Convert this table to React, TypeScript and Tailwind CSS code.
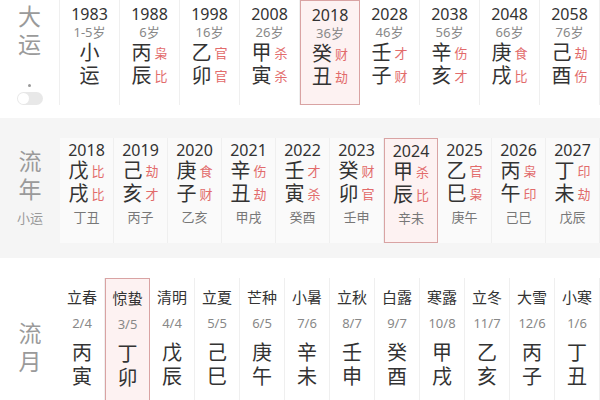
const FONT = "font-['Noto_Sans','Noto_Sans_CJK_SC',sans-serif]";

type Pillar = {
    top: string;
    sub?: string;
    stem: string;
    branch: string;
    stemTag?: string;
    branchTag?: string;
    extra?: string;
    hl?: boolean;
};

const dayun: Pillar[] = [
    { top: '1983', sub: '1-5岁', stem: '小', branch: '运' },
    { top: '1988', sub: '6岁', stem: '丙', stemTag: '枭', branch: '辰', branchTag: '比' },
    { top: '1998', sub: '16岁', stem: '乙', stemTag: '官', branch: '卯', branchTag: '官' },
    { top: '2008', sub: '26岁', stem: '甲', stemTag: '杀', branch: '寅', branchTag: '杀' },
    { top: '2018', sub: '36岁', stem: '癸', stemTag: '财', branch: '丑', branchTag: '劫', hl: true },
    { top: '2028', sub: '46岁', stem: '壬', stemTag: '才', branch: '子', branchTag: '财' },
    { top: '2038', sub: '56岁', stem: '辛', stemTag: '伤', branch: '亥', branchTag: '才' },
    { top: '2048', sub: '66岁', stem: '庚', stemTag: '食', branch: '戌', branchTag: '比' },
    { top: '2058', sub: '76岁', stem: '己', stemTag: '劫', branch: '酉', branchTag: '伤' },
];

const liunian: Pillar[] = [
    { top: '2018', stem: '戊', stemTag: '比', branch: '戌', branchTag: '比', extra: '丁丑' },
    { top: '2019', stem: '己', stemTag: '劫', branch: '亥', branchTag: '才', extra: '丙子' },
    { top: '2020', stem: '庚', stemTag: '食', branch: '子', branchTag: '财', extra: '乙亥' },
    { top: '2021', stem: '辛', stemTag: '伤', branch: '丑', branchTag: '劫', extra: '甲戌' },
    { top: '2022', stem: '壬', stemTag: '才', branch: '寅', branchTag: '杀', extra: '癸酉' },
    { top: '2023', stem: '癸', stemTag: '财', branch: '卯', branchTag: '官', extra: '壬申' },
    { top: '2024', stem: '甲', stemTag: '杀', branch: '辰', branchTag: '比', extra: '辛未', hl: true },
    { top: '2025', stem: '乙', stemTag: '官', branch: '巳', branchTag: '枭', extra: '庚午' },
    { top: '2026', stem: '丙', stemTag: '枭', branch: '午', branchTag: '印', extra: '己巳' },
    { top: '2027', stem: '丁', stemTag: '印', branch: '未', branchTag: '劫', extra: '戊辰' },
];

const liuyue: Pillar[] = [
    { top: '立春', sub: '2/4', stem: '丙', branch: '寅' },
    { top: '惊蛰', sub: '3/5', stem: '丁', branch: '卯', hl: true },
    { top: '清明', sub: '4/4', stem: '戊', branch: '辰' },
    { top: '立夏', sub: '5/5', stem: '己', branch: '巳' },
    { top: '芒种', sub: '6/5', stem: '庚', branch: '午' },
    { top: '小暑', sub: '7/6', stem: '辛', branch: '未' },
    { top: '立秋', sub: '8/7', stem: '壬', branch: '申' },
    { top: '白露', sub: '9/7', stem: '癸', branch: '酉' },
    { top: '寒露', sub: '10/8', stem: '甲', branch: '戌' },
    { top: '立冬', sub: '11/7', stem: '乙', branch: '亥' },
    { top: '大雪', sub: '12/6', stem: '丙', branch: '子' },
    { top: '小寒', sub: '1/6', stem: '丁', branch: '丑' },
];

// 干支 + 十神小字
function GanZhi({ ch, tag }: { ch: string; tag?: string }) {
    return (
        <div className="flex items-center justify-center gap-[3px] h-[22px]">
            <span className="block text-[20px] leading-[22px] text-[#333]">{ch}</span>
            {tag && <span className="block text-[13px] leading-[16px] text-[#e26b6b]">{tag}</span>}
        </div>
    );
}

function cellClass(hl?: boolean) {
    return hl
        ? 'border border-[#d9a3a3] bg-[#fdf2f2]'
        : 'border-r border-[#efefef]';
}

export default function App() {
    return (
        <div className={`w-[600px] h-[400px] overflow-hidden bg-white ${FONT}`}>
            {/* 大运 */}
            <div className="flex h-[118px]">
                <div className="w-[60px] flex flex-col items-center text-[#9a9a9a] border-r border-[#efefef] h-[105px]">
                    <span className="text-[23px] leading-[28px] mt-[2px]">大</span>
                    <span className="text-[23px] leading-[28px]">运</span>
                    <span className="w-[3px] h-[3px] rounded-full bg-[#999] mt-[26px]" />
                    <div className="mt-[5px] w-[26px] h-[13px] rounded-full bg-[#e8e8e8] flex items-center px-[1px]">
                        <span className="w-[11px] h-[11px] rounded-full bg-white" />
                    </div>
                </div>
                {dayun.map((p) => (
                    <div key={p.top} className={`w-[60px] h-[105px] flex flex-col items-center pt-[4px] ${cellClass(p.hl)}`}>
                        <span className="block text-[16px] leading-[20px] text-[#333]">{p.top}</span>
                        <span className="block text-[13px] leading-[17px] text-[#888]">{p.sub}</span>
                        <div className="mt-[1px]">
                            <GanZhi ch={p.stem} tag={p.stemTag} />
                        </div>
                        <div className="mt-[1px]">
                            <GanZhi ch={p.branch} tag={p.branchTag} />
                        </div>
                    </div>
                ))}
            </div>

            {/* 流年 */}
            <div className="flex h-[140px] bg-[#f5f5f5] pt-[20px]">
                <div className="w-[60px] flex flex-col items-center text-[#9a9a9a]">
                    <span className="text-[23px] leading-[28px] mt-[9px]">流</span>
                    <span className="text-[23px] leading-[28px]">年</span>
                    <span className="text-[13px] leading-[18px] mt-[6px]">小运</span>
                </div>
                {liunian.map((p) => (
                    <div key={p.top} className={`w-[54px] h-[105px] flex flex-col items-center pt-[2px] ${p.hl ? cellClass(true) : 'bg-[#fafafa] border-r border-[#efefef]'}`}>
                        <span className="block text-[16px] leading-[20px] text-[#333]">{p.top}</span>
                        <GanZhi ch={p.stem} tag={p.stemTag} />
                        <div className="mt-[1px]">
                            <GanZhi ch={p.branch} tag={p.branchTag} />
                        </div>
                        <span className="block text-[13px] leading-[18px] text-[#777] mt-[3px]">{p.extra}</span>
                    </div>
                ))}
            </div>

            {/* 流月 */}
            <div className="flex h-[142px] pt-[20px]">
                <div className="w-[60px] flex flex-col items-center text-[#9a9a9a]">
                    <span className="text-[23px] leading-[28px] mt-[41px]">流</span>
                    <span className="text-[23px] leading-[28px]">月</span>
                </div>
                {liuyue.map((p) => (
                    <div key={p.top} className={`w-[45px] h-[130px] flex flex-col items-center pt-[9px] ${cellClass(p.hl)}`}>
                        <span className="block text-[15px] leading-[20px] text-[#333]">{p.top}</span>
                        <span className="block text-[13px] leading-[20px] text-[#888] mt-[6px]">{p.sub}</span>
                        <span className="block text-[20px] leading-[24px] text-[#333] mt-[8px]">{p.stem}</span>
                        <span className="block text-[20px] leading-[24px] text-[#333]">{p.branch}</span>
                    </div>
                ))}
            </div>
        </div>
    );
}
